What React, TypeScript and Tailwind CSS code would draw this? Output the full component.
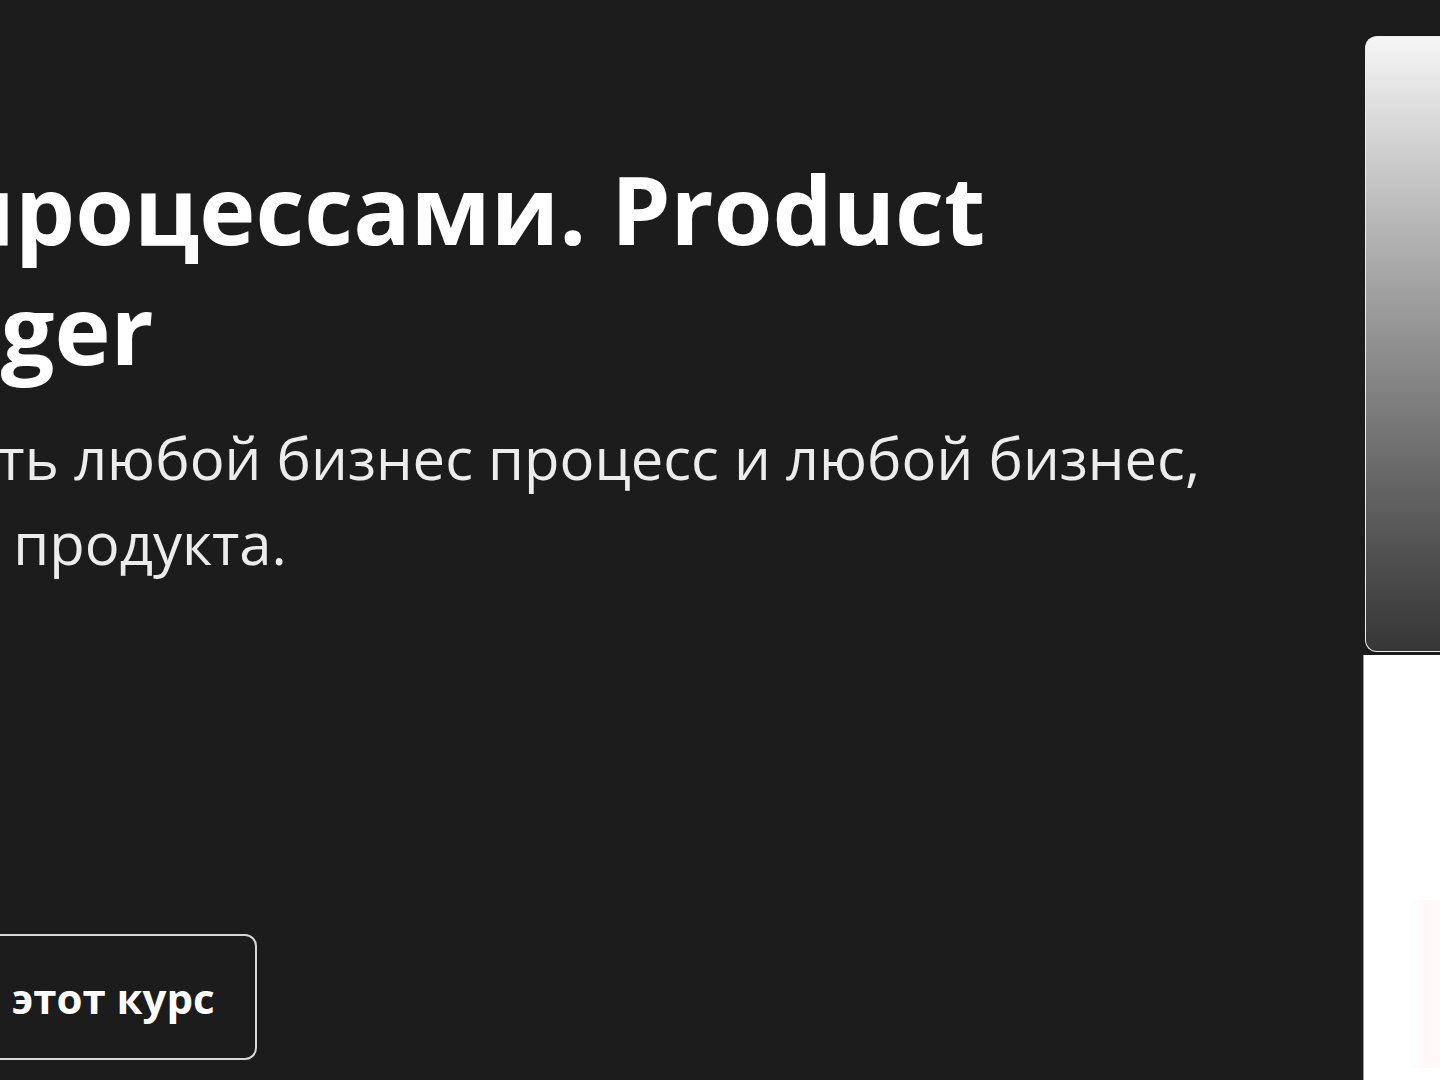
import React from 'react';

const App: React.FC = () => {
  return (
    <div className="w-[1440px] h-[1080px] overflow-hidden bg-[#1c1c1c] flex font-['Open_Sans',sans-serif]">
      {/* Hero text column, left side cut by the viewport */}
      <div className="flex-1 min-w-0 flex flex-col pt-[148px]">
        <h1 className="text-[95px] leading-[120px] font-bold text-white whitespace-nowrap">
          <span className="block -ml-[140px]">и процессами. Product</span>
          <span className="block -ml-[266px]">Manager</span>
        </h1>

        <p className="mt-[27px] text-[58px] leading-[85px] text-[#ececec] whitespace-nowrap">
          <span className="block -ml-[213px]">улучшать любой бизнес процесс и любой бизнес,</span>
          <span className="block -ml-[325px]">для вашего продукта.</span>
        </p>

        <div className="mt-[349px] flex">
          <button className="-ml-[200px] h-[126px] px-[40px] rounded-[12px] border-2 border-[#d6d6d6] text-[42px] font-bold text-white whitespace-nowrap">
            Купить этот курс
          </button>
        </div>
      </div>

      {/* Right column: preview card and white panel */}
      <div className="w-[77px] shrink-0 flex flex-col">
        <div className="mt-[36px] ml-[2px] h-[616px] rounded-l-[12px] border border-r-0 border-[#ededed] bg-gradient-to-b from-[#f6f6f6] to-[#363636]" />
        <div className="flex-1 mt-[3px] bg-white border-l border-[#9a9a9a] flex justify-end pt-[245px] pb-[12px]">
          <div className="w-[30px] bg-gradient-to-r from-[#fafffe] via-[#fff8fb] to-[#fffaf8]" />
        </div>
      </div>
    </div>
  );
};

export default App;
